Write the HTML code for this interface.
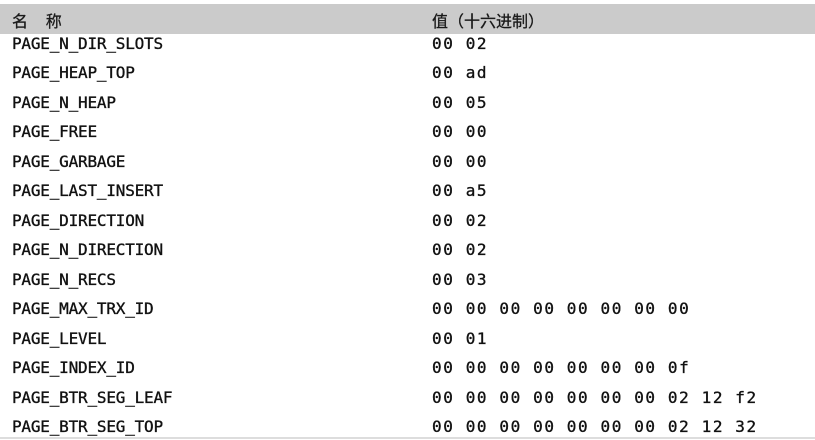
<!DOCTYPE html>
<html><head><meta charset="utf-8"><style>
html,body{margin:0;padding:0;background:#fff;width:815px;height:440px;overflow:hidden}
.hdr{position:absolute;left:0;top:4px;width:815px;height:30px;background:#cbcbcb}
.hdr span{position:absolute;top:4px;font:16px "Liberation Sans","Noto Sans CJK SC",sans-serif;color:#1a1a1a;white-space:nowrap;-webkit-text-stroke:0.3px #1a1a1a}
.r{position:absolute;left:0;width:815px;height:20px;font:16px "DejaVu Sans Mono",monospace;color:#111;white-space:nowrap;-webkit-text-stroke:0.35px #111}
.r .a{position:absolute;left:12px;letter-spacing:-0.2px;white-space:nowrap}
.r .b{position:absolute;left:432px;letter-spacing:1.6px;white-space:pre}
.bl{position:absolute;left:0;top:437px;width:815px;height:2px;background:#ddd}
</style></head><body>
<div class="hdr"><span style="left:12px">名&nbsp;&nbsp;&nbsp;&nbsp;称</span><span style="left:432px">值（十六进制）</span></div>
<div class="r" style="top:34px"><span class="a">PAGE_N_DIR_SLOTS</span><span class="b">00 02</span></div>
<div class="r" style="top:63px"><span class="a">PAGE_HEAP_TOP</span><span class="b">00 ad</span></div>
<div class="r" style="top:93px"><span class="a">PAGE_N_HEAP</span><span class="b">00 05</span></div>
<div class="r" style="top:122px"><span class="a">PAGE_FREE</span><span class="b">00 00</span></div>
<div class="r" style="top:152px"><span class="a">PAGE_GARBAGE</span><span class="b">00 00</span></div>
<div class="r" style="top:181px"><span class="a">PAGE_LAST_INSERT</span><span class="b">00 a5</span></div>
<div class="r" style="top:211px"><span class="a">PAGE_DIRECTION</span><span class="b">00 02</span></div>
<div class="r" style="top:240px"><span class="a">PAGE_N_DIRECTION</span><span class="b">00 02</span></div>
<div class="r" style="top:270px"><span class="a">PAGE_N_RECS</span><span class="b">00 03</span></div>
<div class="r" style="top:299px"><span class="a">PAGE_MAX_TRX_ID</span><span class="b">00 00 00 00 00 00 00 00</span></div>
<div class="r" style="top:329px"><span class="a">PAGE_LEVEL</span><span class="b">00 01</span></div>
<div class="r" style="top:358px"><span class="a">PAGE_INDEX_ID</span><span class="b">00 00 00 00 00 00 00 0f</span></div>
<div class="r" style="top:388px"><span class="a">PAGE_BTR_SEG_LEAF</span><span class="b">00 00 00 00 00 00 00 02 12 f2</span></div>
<div class="r" style="top:417px"><span class="a">PAGE_BTR_SEG_TOP</span><span class="b">00 00 00 00 00 00 00 02 12 32</span></div>
<div class="bl"></div>
</body></html>
